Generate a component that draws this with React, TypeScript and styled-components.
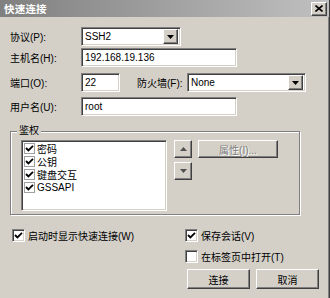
import React from "react";
import styled, { createGlobalStyle, css } from "styled-components";

const GlobalStyle = createGlobalStyle`
  html, body {
    margin: 0;
    padding: 0;
    background: #d4d0c8;
  }
  body {
    font-family: "Liberation Sans", "Noto Sans CJK SC", sans-serif;
    font-size: 10px;
    color: #000;
  }
`;

const sunken = css`
  box-sizing: border-box;
  border: 1px solid;
  border-color: #808080 #ffffff #ffffff #808080;
  box-shadow: inset 1px 1px #404040, inset -1px -1px #d4d0c8;
  background: #ffffff;
`;

const raised = css`
  box-sizing: border-box;
  border: 1px solid;
  border-color: #ffffff #404040 #404040 #ffffff;
  box-shadow: inset -1px -1px #808080, inset 1px 1px #d4d0c8;
  background: #d4d0c8;
`;

const Window = styled.div`
  width: 330px;
  height: 298px;
  box-sizing: border-box;
  background: #d4d0c8;
  border-right: 1px solid #404040;
  box-shadow: inset -1px 0 #808080;
  display: flex;
  flex-direction: column;
`;

const TitleBar = styled.div`
  height: 17px;
  flex: none;
  display: flex;
  align-items: center;
  justify-content: space-between;
  padding: 0 2px 0 4px;
  background: linear-gradient(90deg, #808080 0%, #c0c0c0 100%);
`;

const Title = styled.span`
  color: #ffffff;
  font-family: "Noto Sans CJK SC", sans-serif;
  font-size: 10.5px;
  font-weight: 700;
  letter-spacing: 0.2px;
`;

const CloseButton = styled.div`
  ${raised};
  width: 16px;
  height: 14px;
  display: flex;
  align-items: center;
  justify-content: center;
`;

const Content = styled.div`
  padding: 10px 0 0 10px;
  display: flex;
  flex-direction: column;
`;

const Row = styled.div<{ $gap: number }>`
  display: flex;
  align-items: center;
  height: 19px;
  margin-top: ${({ $gap }) => $gap}px;
`;

const Label = styled.span<{ $w: number; $ml?: number }>`
  width: ${({ $w }) => $w}px;
  margin-left: ${({ $ml = 0 }) => $ml}px;
  flex: none;
  white-space: nowrap;
`;

const Edit = styled.div<{ $w: number }>`
  ${sunken};
  width: ${({ $w }) => $w}px;
  height: 19px;
  padding: 0 3px;
  display: flex;
  align-items: center;
  white-space: nowrap;
`;

const Combo = styled.div<{ $w: number }>`
  ${sunken};
  width: ${({ $w }) => $w}px;
  height: 19px;
  padding: 2px 2px 2px 3px;
  display: flex;
  align-items: center;
  justify-content: space-between;
`;

const DropButton = styled.div`
  ${raised};
  width: 15px;
  height: 15px;
  display: flex;
  align-items: center;
  justify-content: center;
`;

const Group = styled.div`
  position: relative;
  margin-top: 15px;
  width: 290px;
  height: 84px;
  box-sizing: border-box;
  border: 1px solid #808080;
  box-shadow: inset 1px 1px #ffffff, 1px 1px #ffffff;
  padding: 8px 0 2px 10px;
  display: flex;
  align-items: flex-start;
`;

const Legend = styled.span`
  position: absolute;
  top: -8px;
  left: 6px;
  padding: 0 2px;
  background: #d4d0c8;
  line-height: 14px;
`;

const ListBox = styled.div`
  ${sunken};
  width: 146px;
  height: 71px;
  padding: 1px 2px;
  display: flex;
  flex-direction: column;
`;

const ListItem = styled.div`
  height: 13px;
  display: flex;
  align-items: center;
  gap: 2px;
  white-space: nowrap;
`;

const ArrowColumn = styled.div`
  margin-left: 7px;
  display: flex;
  flex-direction: column;
  gap: 4px;
`;

const SmallButton = styled.div`
  ${raised};
  width: 18px;
  height: 18px;
  display: flex;
  align-items: center;
  justify-content: center;
`;

const PushButton = styled.div<{ $w: number; $h: number; $disabled?: boolean }>`
  ${raised};
  width: ${({ $w }) => $w}px;
  height: ${({ $h }) => $h}px;
  flex: none;
  display: flex;
  align-items: center;
  justify-content: center;
  white-space: nowrap;
  ${({ $disabled }) =>
    $disabled &&
    css`
      color: #808080;
      text-shadow: 1px 1px #ffffff;
    `}
`;

const PropsButton = styled(PushButton)`
  margin-left: 6px;
`;

const Bottom = styled.div`
  display: flex;
  margin-top: 14px;
`;

const LeftColumn = styled.div`
  width: 175px;
  padding-left: 2px;
  box-sizing: border-box;
`;

const RightColumn = styled.div`
  display: flex;
  flex-direction: column;
  gap: 8px;
`;

const CheckRow = styled.div`
  height: 13px;
  display: flex;
  align-items: center;
  gap: 3px;
  white-space: nowrap;
`;

const Box = styled.span<{ $flat?: boolean }>`
  ${sunken};
  width: ${({ $flat }) => ($flat ? 11 : 13)}px;
  height: ${({ $flat }) => ($flat ? 11 : 13)}px;
  flex: none;
  display: flex;
  align-items: center;
  justify-content: center;
  ${({ $flat }) =>
    $flat &&
    css`
      border: 1px solid #a0a0a0;
      box-shadow: none;
    `}
`;

const ButtonRow = styled.div`
  display: flex;
  gap: 6px;
  margin-left: 2px;
  margin-top: -2px;
`;

const CheckMark = () => (
  <svg width="9" height="9" viewBox="0 0 9 9">
    <path d="M1 4 L3.4 6.4 L8 1.8" fill="none" stroke="#000" strokeWidth="1.8" />
  </svg>
);

const CheckBox = ({ checked, flat }: { checked: boolean; flat?: boolean }) => (
  <Box $flat={flat}>{checked && <CheckMark />}</Box>
);

const DownArrow = ({ color = "#000" }: { color?: string }) => (
  <svg width="7" height="4" viewBox="0 0 7 4">
    <polygon points="0,0 7,0 3.5,4" fill={color} />
  </svg>
);

const UpArrow = ({ color = "#000" }: { color?: string }) => (
  <svg width="7" height="4" viewBox="0 0 7 4">
    <polygon points="0,4 7,4 3.5,0" fill={color} />
  </svg>
);

const authItems = ["密码", "公钥", "键盘交互", "GSSAPI"];

export default function App() {
  return (
    <>
      <GlobalStyle />
      <Window>
        <TitleBar>
          <Title>快速连接</Title>
          <CloseButton>
            <svg width="8" height="7" viewBox="0 0 8 7">
              <path d="M0.5 0.5 L7.5 6.5 M7.5 0.5 L0.5 6.5" stroke="#000" strokeWidth="1.6" />
            </svg>
          </CloseButton>
        </TitleBar>
        <Content>
          <Row $gap={0}>
            <Label $w={71}>协议(P):</Label>
            <Combo $w={100}>
              <span>SSH2</span>
              <DropButton>
                <DownArrow />
              </DropButton>
            </Combo>
          </Row>
          <Row $gap={2}>
            <Label $w={71}>主机名(H):</Label>
            <Edit $w={156}>192.168.19.136</Edit>
          </Row>
          <Row $gap={6}>
            <Label $w={71}>端口(O):</Label>
            <Edit $w={39}>22</Edit>
            <Label $w={50} $ml={17}>防火墙(F):</Label>
            <Combo $w={119}>
              <span>None</span>
              <DropButton>
                <DownArrow />
              </DropButton>
            </Combo>
          </Row>
          <Row $gap={5}>
            <Label $w={71}>用户名(U):</Label>
            <Edit $w={156}>root</Edit>
          </Row>

          <Group>
            <Legend>鉴权</Legend>
            <ListBox>
              {authItems.map((item) => (
                <ListItem key={item}>
                  <CheckBox checked flat />
                  {item}
                </ListItem>
              ))}
            </ListBox>
            <ArrowColumn>
              <SmallButton>
                <UpArrow color="#505050" />
              </SmallButton>
              <SmallButton>
                <DownArrow color="#505050" />
              </SmallButton>
            </ArrowColumn>
            <PropsButton $w={80} $h={18} $disabled>
              属性(I)...
            </PropsButton>
          </Group>

          <Bottom>
            <LeftColumn>
              <CheckRow>
                <CheckBox checked />
                启动时显示快速连接(W)
              </CheckRow>
            </LeftColumn>
            <RightColumn>
              <CheckRow>
                <CheckBox checked />
                保存会话(V)
              </CheckRow>
              <CheckRow>
                <CheckBox checked={false} />
                在标签页中打开(T)
              </CheckRow>
              <ButtonRow>
                <PushButton $w={63} $h={20}>连接</PushButton>
                <PushButton $w={63} $h={20}>取消</PushButton>
              </ButtonRow>
            </RightColumn>
          </Bottom>
        </Content>
      </Window>
    </>
  );
}
